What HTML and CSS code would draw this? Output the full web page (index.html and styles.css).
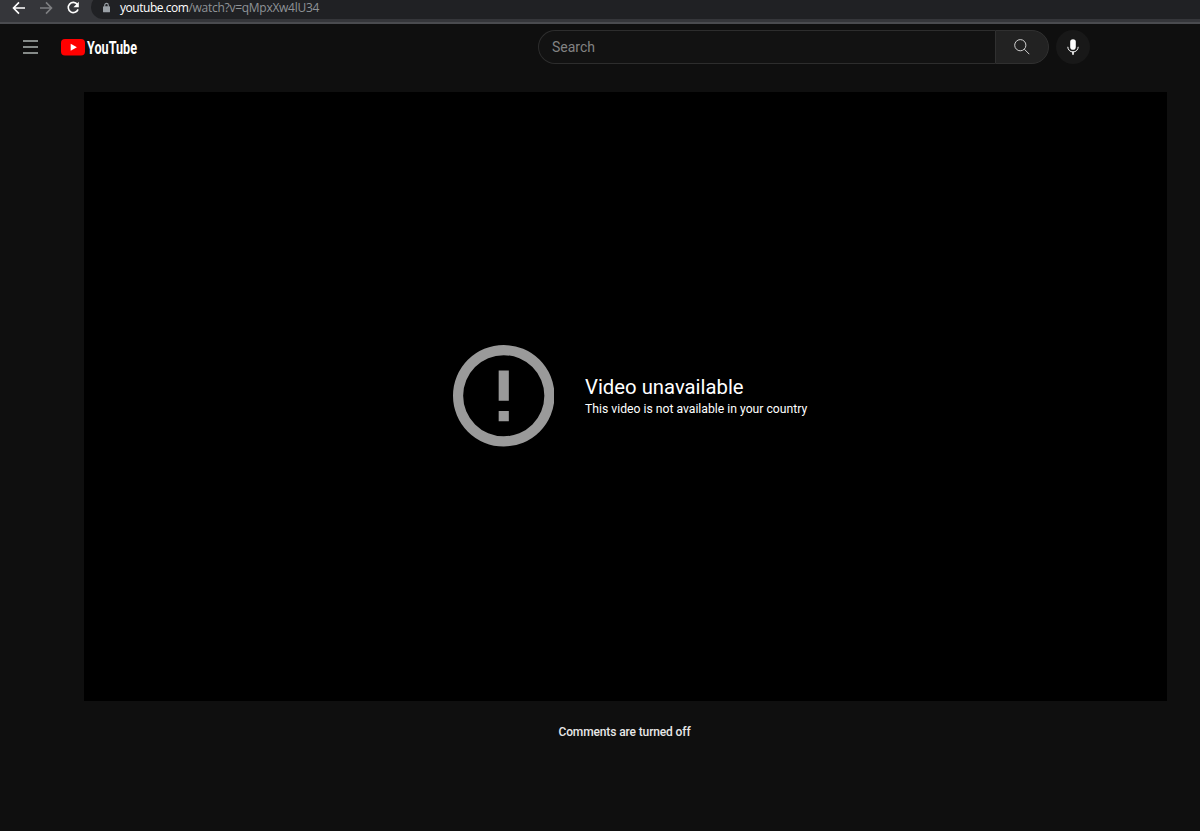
FILE: index.html
```
<!DOCTYPE html>
<html lang="en">
<head>
    <meta charset="UTF-8">
    <meta name="viewport" content="width=device-width, initial-scale=1.0">
    <title>YouTube</title>
    <link rel="stylesheet" href="styles.css">
</head>
<body>
    <!-- Browser bar -->
    <div class="browser-bar">
        <svg class="nav-icon" viewBox="0 0 14 14"><path d="M13 7H1.6M7 1.4L1.5 7L7 12.6"/></svg>
        <svg class="nav-icon disabled" viewBox="0 0 14 14"><path d="M1 7h11.4M7 1.4L12.5 7L7 12.6"/></svg>
        <svg class="nav-icon" viewBox="0 0 14 14"><path d="M11.4 3.4A5.1 5.1 0 1 0 12.1 8.4"/><path class="fill" d="M12.8 0.8V6.2H7.4z"/></svg>
        <div class="address">
            <svg class="lock" viewBox="0 0 8 11"><rect y="4" width="8" height="7" rx="1"/><path d="M2 4.5V2.8a2 2 0 0 1 4 0v1.7"/></svg>
            <span class="url"><span class="domain">youtube.com</span>/watch?v=qMpxXw4lU34</span>
        </div>
    </div>

    <header class="masthead">
        <div class="start">
            <div class="menu"><i></i><i></i><i></i></div>
            <svg class="logo" viewBox="0 0 84 24">
                <rect y="4" width="24" height="16.5" rx="4" fill="#ff0000"/>
                <path d="M9.7 8.7v7.1l6.2-3.55z" fill="#fff"/>
                <text x="26" y="18.6" textLength="50" lengthAdjust="spacingAndGlyphs">YouTube</text>
            </svg>
        </div>
        <div class="search">
            <div class="search-box">Search</div>
            <div class="search-button">
                <svg viewBox="0 0 16 16"><circle cx="6.3" cy="6.2" r="5.6"/><path d="M10.3 10.2L15.3 15.2"/></svg>
            </div>
        </div>
        <div class="mic">
            <svg viewBox="0 0 12 16"><rect x="3.2" y="0.3" width="5.6" height="10.4" rx="2.8"/><path d="M0.8 7.8a5.2 5.2 0 0 0 10.4 0"/><path class="stem" d="M6 12.5V15.7"/></svg>
        </div>
    </header>

    <main>
        <div class="player">
            <svg class="error-icon" viewBox="0 0 20 20"><path d="M9 5h2v6H9zM9 13h2v2H9zM10 0a10 10 0 1 0 0 20a10 10 0 0 0 0-20zM10 18a8 8 0 1 1 0-16a8 8 0 0 1 0 16z"/></svg>
            <div class="error">
                <div class="reason">Video unavailable</div>
                <div class="subreason">This video is not available in your country</div>
            </div>
        </div>
        <div class="comments">Comments are turned off</div>
    </main>
</body>
</html>
```
FILE: styles.css
```
* {
    box-sizing: border-box;
}

body {
    margin: 0;
    height: 100vh;
    background-color: #0f0f0f;
    color: #fff;
    font-family: Roboto, Arial, sans-serif;
    overflow: hidden;
}

svg {
    display: block;
    flex: none;
}

.browser-bar {
    display: flex;
    height: 24px;
    padding-left: 12px;
    background-color: #35363a;
    border-bottom: 2px solid #4a4b4f;
    overflow: hidden;
}

.nav-icon {
    width: 14px;
    height: 14px;
    margin: 1px 13px 0 0;
    fill: none;
    stroke: #fff;
    stroke-width: 1.6;
}

.nav-icon .fill {
    fill: #fff;
    stroke: none;
}

.disabled {
    stroke: #7e7f82;
}

.address {
    display: flex;
    flex: 1;
    align-items: center;
    height: 24px;
    margin-top: -5px;
    margin-left: -2px;
    padding-left: 12px;
    background-color: #202124;
    border-radius: 12px 0 0 12px;
}

.lock {
    width: 7px;
    height: 11px;
    fill: #9aa0a6;
}

.lock path {
    fill: none;
    stroke: #9aa0a6;
    stroke-width: 1.3;
}

.url {
    margin-left: 10px;
    padding-top: 1px;
    color: #8f9397;
    font-family: "Open Sans", sans-serif;
    font-size: 12px;
    letter-spacing: -0.27px;
    white-space: nowrap;
}

.domain {
    color: #fff;
    letter-spacing: -0.47px;
}

.masthead {
    display: flex;
    align-items: center;
    height: 46px;
}

.start {
    display: flex;
    align-items: center;
    width: 538px;
    padding-left: 23px;
}

.menu {
    display: flex;
    flex-direction: column;
    gap: 4px;
    width: 15px;
    margin-right: 23px;
}

.menu i {
    height: 2px;
    background-color: #858a88;
}

.logo {
    width: 84px;
    height: 24px;
    overflow: visible;
}

.logo text {
    fill: #fff;
    font-family: Roboto, sans-serif;
    font-size: 18.5px;
    font-weight: 700;
}

.search {
    display: flex;
    width: 511px;
    height: 34px;
}

.search-box {
    flex: 1;
    padding-left: 13px;
    border: 1px solid #2d2d2d;
    border-right: 0;
    border-radius: 17px 0 0 17px;
    background-color: #121212;
    color: #828282;
    font-size: 14px;
    line-height: 32px;
}

.search-button {
    display: flex;
    align-items: center;
    justify-content: center;
    width: 54px;
    border: 1px solid #303030;
    border-radius: 0 17px 17px 0;
    background-color: #222;
}

.search-button svg {
    width: 16px;
    height: 16px;
    fill: none;
    stroke: #d0d0d0;
    stroke-width: 1;
}

.mic {
    display: flex;
    align-items: center;
    justify-content: center;
    width: 34px;
    height: 34px;
    margin-left: 7px;
    border-radius: 50%;
    background-color: #181818;
}

.mic svg {
    width: 12px;
    height: 16px;
    fill: #fff;
}

.mic path {
    fill: none;
    stroke: #fff;
    stroke-width: 1;
}

.mic .stem {
    stroke-width: 1.6;
}

.player {
    display: flex;
    align-items: center;
    width: 1083px;
    height: 609px;
    margin: 21.5px 0 0 84px;
    padding-left: 368.5px;
    background-color: #000;
}

.error-icon {
    width: 101.5px;
    height: 101.5px;
    margin-right: 31px;
    fill: #9a9a9a;
}

.reason {
    font-size: 20.3px;
    line-height: 25px;
}

.subreason {
    font-size: 12.2px;
    line-height: 18px;
}

.comments {
    width: 1081px;
    margin: 23.5px 0 0 84px;
    color: #e8e8e8;
    font-size: 12px;
    font-weight: 500;
    letter-spacing: -0.12px;
    line-height: 17px;
    text-align: center;
}
```
